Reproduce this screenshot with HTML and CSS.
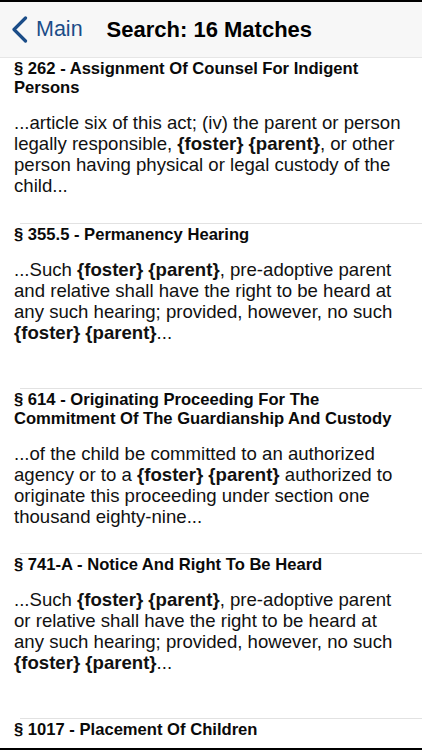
FILE: index.html
```html
<!DOCTYPE html>
<html>
<head>
<meta charset="utf-8">
<link rel="stylesheet" href="styles.css">
</head>
<body>
<div class="screen">
  <div class="topbar"></div>
  <header class="nav">
    <div class="back">
      <svg class="chev" width="17" height="27" viewBox="0 0 17 27"><path d="M14.5 2 L3 13.5 L14.5 25" fill="none" stroke="#1b4d88" stroke-width="3.2" stroke-linecap="round" stroke-linejoin="round"/></svg>
      <span class="back-label">Main</span>
    </div>
    <h1 class="nav-title">Search: 16 Matches</h1>
  </header>
  <main class="list">
    <section class="cell">
      <h2 class="cell-title">§ 262 - Assignment Of Counsel For Indigent Persons</h2>
      <p class="cell-body">...article six of this act; (iv) the parent or person legally responsible, <b>{foster} {parent}</b>, or other person having physical or legal custody of the child...</p>
    </section>
    <section class="cell">
      <h2 class="cell-title">§ 355.5 - Permanency Hearing</h2>
      <p class="cell-body">...Such <b>{foster} {parent}</b>, pre-adoptive parent and relative shall have the right to be heard at any such hearing; provided, however, no such <b>{foster} {parent}</b>...</p>
    </section>
    <section class="cell">
      <h2 class="cell-title">§ 614 - Originating Proceeding For The Commitment Of The Guardianship And Custody</h2>
      <p class="cell-body">...of the child be committed to an authorized agency or to a <b>{foster} {parent}</b> authorized to originate this proceeding under section one thousand eighty-nine...</p>
    </section>
    <section class="cell">
      <h2 class="cell-title">§ 741-A - Notice And Right To Be Heard</h2>
      <p class="cell-body">...Such <b>{foster} {parent}</b>, pre-adoptive parent or relative shall have the right to be heard at any such hearing; provided, however, no such <b>{foster} {parent}</b>...</p>
    </section>
    <section class="cell">
      <h2 class="cell-title">§ 1017 - Placement Of Children</h2>
    </section>
  </main>
  <div class="bottombar"></div>
</div>
</body>
</html>
```
FILE: styles.css
```css
html, body {
  margin: 0;
  padding: 0;
  background: #fff;
}
.screen {
  width: 422px;
  height: 750px;
  display: flex;
  flex-direction: column;
  overflow: hidden;
  font-family: "Liberation Sans", Arial, sans-serif;
  color: #111;
}
.topbar {
  height: 2px;
  background: #000;
  flex: none;
}
.nav {
  flex: none;
  height: 56px;
  background: #f7f7f7;
  display: flex;
  align-items: center;
  border-bottom: 1px solid #e6e6e6;
  box-sizing: border-box;
}
.back {
  display: flex;
  align-items: center;
  padding-left: 11px;
  gap: 8px;
}
.chev {
  display: block;
}
.back-label {
  color: #1b4d88;
  font-size: 21.5px;
}
.nav-title {
  margin: 0 0 0 24px;
  font-size: 22px;
  font-weight: bold;
  color: #000;
}
.list {
  flex: 1;
  overflow: hidden;
}
.cell {
  height: 165px;
  box-sizing: border-box;
  padding: 1px 14px 0 14px;
}
.cell + .cell::before {
  content: "";
  display: block;
  height: 1px;
  background: #e2e2e2;
  margin: -1px -14px 1px 6px;
}
.cell-title {
  margin: 0;
  font-size: 16.6px;
  line-height: 19px;
  font-weight: bold;
  color: #0a0a0a;
}
.cell-body {
  margin: 15px 0 0 0;
  font-size: 18.6px;
  line-height: 21px;
  color: #111;
}
.cell-body b {
  font-weight: bold;
}
.bottombar {
  height: 2px;
  background: #000;
  flex: none;
}
```
